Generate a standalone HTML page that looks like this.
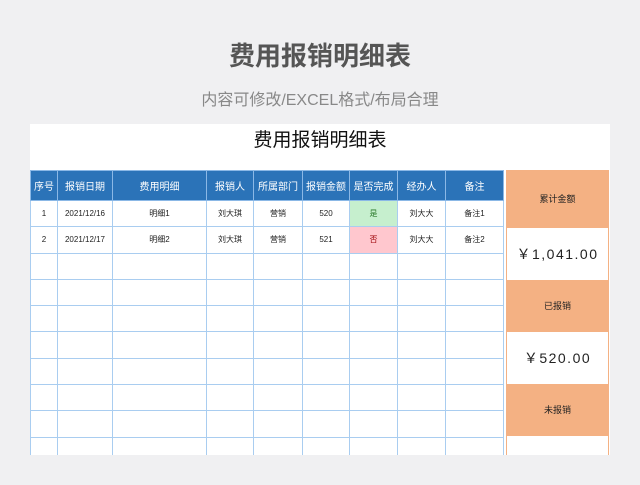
<!DOCTYPE html>
<html><head><meta charset="utf-8"><style>
*{margin:0;padding:0;box-sizing:border-box}
body{width:640px;height:485px;background:#f0f0f2;font-family:"Liberation Sans","Noto Sans CJK SC",sans-serif;position:relative;overflow:hidden}
.t1{position:absolute;top:36px;left:0;width:640px;text-align:center;font-size:26px;font-weight:bold;color:#555}
.t2{position:absolute;top:86px;left:0;width:640px;text-align:center;font-size:16px;color:#888}
.sheet{position:absolute;left:30px;top:124px;width:580px;height:331px;background:#fff}
.st{position:absolute;top:1px;left:0;width:580px;text-align:center;font-size:19px;color:#111}
table{position:absolute;left:30px;top:170px;border-collapse:collapse;table-layout:fixed}
td{border:1px solid #a9cdf0;font-size:8px;text-align:center;color:#222;height:26.3px;padding:0}
tr.h td{background:#2b73b8;color:#fff;font-size:10px;height:30px;border-color:#8bb8e6}
.y{background:#c6efce;color:#2a7a2a}.n{background:#ffc7ce;color:#9c0006}
.rp{position:absolute;left:506px;width:103px;border-left:1px solid #f4b183;border-right:1px solid #f4b183;text-align:center}
.o{background:#f4b183;font-size:9px;color:#222}
.w{background:#fff;font-size:14px;color:#222;letter-spacing:1.5px}
</style></head><body>
<div class="t1">费用报销明细表</div>
<div class="t2">内容可修改/EXCEL格式/布局合理</div>
<div class="sheet"><div class="st">费用报销明细表</div></div>
<table>
<colgroup><col style="width:27px"><col style="width:55px"><col style="width:94px"><col style="width:47px"><col style="width:49px"><col style="width:47px"><col style="width:48px"><col style="width:48px"><col style="width:58px"></colgroup>
<tr class="h"><td>序号</td><td>报销日期</td><td>费用明细</td><td>报销人</td><td>所属部门</td><td>报销金额</td><td>是否完成</td><td>经办人</td><td>备注</td></tr>
<tr><td>1</td><td>2021/12/16</td><td>明细1</td><td>刘大琪</td><td>营销</td><td>520</td><td class="y">是</td><td>刘大大</td><td>备注1</td></tr>
<tr><td>2</td><td>2021/12/17</td><td>明细2</td><td>刘大琪</td><td>营销</td><td>521</td><td class="n">否</td><td>刘大大</td><td>备注2</td></tr>
<tr><td></td><td></td><td></td><td></td><td></td><td></td><td></td><td></td><td></td></tr>
<tr><td></td><td></td><td></td><td></td><td></td><td></td><td></td><td></td><td></td></tr>
<tr><td></td><td></td><td></td><td></td><td></td><td></td><td></td><td></td><td></td></tr>
<tr><td></td><td></td><td></td><td></td><td></td><td></td><td></td><td></td><td></td></tr>
<tr><td></td><td></td><td></td><td></td><td></td><td></td><td></td><td></td><td></td></tr>
<tr><td></td><td></td><td></td><td></td><td></td><td></td><td></td><td></td><td></td></tr>
<tr><td></td><td></td><td></td><td></td><td></td><td></td><td></td><td></td><td></td></tr>
<tr><td></td><td></td><td></td><td></td><td></td><td></td><td></td><td></td><td></td></tr>
</table>
<div style="position:absolute;left:0;top:455px;width:640px;height:30px;background:#f0f0f2"></div>
<div class="rp o" style="top:170px;height:58px;line-height:58px">累计金额</div>
<div class="rp w" style="top:228px;height:52px;line-height:52px">￥1,041.00</div>
<div class="rp o" style="top:280px;height:52px;line-height:52px">已报销</div>
<div class="rp w" style="top:332px;height:52px;line-height:52px">￥520.00</div>
<div class="rp o" style="top:384px;height:52px;line-height:52px">未报销</div>
<div class="rp w" style="top:436px;height:19px"></div>
</body></html>
